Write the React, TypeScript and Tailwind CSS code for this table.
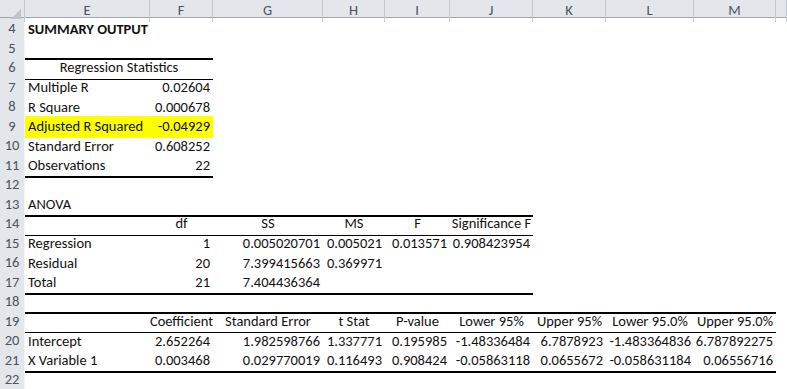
import React from "react";

type Align = "l" | "r" | "c";
type Cell = { text: string; align?: Align; bold?: boolean; span?: number };
type Row = {
  num: number;
  cells: (Cell | null)[];
  line?: { kind: "thick" | "thin"; span: number };
  fill?: number;
};

const cols = ["E", "F", "G", "H", "I", "J", "K", "L", "M", ""];

const L = (text: string, bold = false): Cell => ({ text, align: "l", bold });
const R = (text: string): Cell => ({ text, align: "r" });
const C = (text: string): Cell => ({ text, align: "c" });

const rows: Row[] = [
  { num: 4, cells: [L("SUMMARY OUTPUT", true)] },
  { num: 5, cells: [], line: { kind: "thick", span: 2 } },
  {
    num: 6,
    cells: [{ text: "Regression Statistics", align: "c", span: 2 }],
    line: { kind: "thin", span: 2 },
  },
  { num: 7, cells: [L("Multiple R"), R("0.02604")] },
  { num: 8, cells: [L("R Square"), R("0.000678")] },
  { num: 9, cells: [L("Adjusted R Squared"), R("-0.04929")], fill: 2 },
  { num: 10, cells: [L("Standard Error"), R("0.608252")] },
  {
    num: 11,
    cells: [L("Observations"), R("22")],
    line: { kind: "thick", span: 2 },
  },
  { num: 12, cells: [] },
  { num: 13, cells: [L("ANOVA")], line: { kind: "thick", span: 6 } },
  {
    num: 14,
    cells: [null, C("df"), C("SS"), C("MS"), C("F"), C("Significance F")],
    line: { kind: "thin", span: 6 },
  },
  {
    num: 15,
    cells: [
      L("Regression"),
      R("1"),
      R("0.005020701"),
      R("0.005021"),
      R("0.013571"),
      R("0.908423954"),
    ],
  },
  {
    num: 16,
    cells: [L("Residual"), R("20"), R("7.399415663"), R("0.369971")],
  },
  {
    num: 17,
    cells: [L("Total"), R("21"), R("7.404436364")],
    line: { kind: "thick", span: 6 },
  },
  { num: 18, cells: [], line: { kind: "thick", span: 9 } },
  {
    num: 19,
    cells: [
      null,
      C("Coefficient"),
      C("Standard Error"),
      C("t Stat"),
      C("P-value"),
      C("Lower 95%"),
      C("Upper 95%"),
      C("Lower 95.0%"),
      C("Upper 95.0%"),
    ],
    line: { kind: "thin", span: 9 },
  },
  {
    num: 20,
    cells: [
      L("Intercept"),
      R("2.652264"),
      R("1.982598766"),
      R("1.337771"),
      R("0.195985"),
      R("-1.48336484"),
      R("6.7878923"),
      R("-1.483364836"),
      R("6.787892275"),
    ],
  },
  {
    num: 21,
    cells: [
      L("X Variable 1"),
      R("0.003468"),
      R("0.029770019"),
      R("0.116493"),
      R("0.908424"),
      R("-0.05863118"),
      R("0.0655672"),
      R("-0.058631184"),
      R("0.06556716"),
    ],
    line: { kind: "thick", span: 9 },
  },
  { num: 22, cells: [] },
];

const gridCols =
  "grid grid-cols-[25px_125px_63px_110px_62px_65px_83px_73px_88px_82px_1fr]";

const alignClass = (a?: Align) =>
  a === "r"
    ? "justify-end pr-[3px]"
    : a === "c"
    ? "justify-center"
    : "justify-start pl-[3px]";

const SheetRow = ({ row }: { row: Row }) => {
  const items: React.ReactNode[] = [];
  let i = 0;
  while (i < cols.length) {
    const cell = row.cells[i] ?? null;
    const span = cell?.span ?? 1;
    const lined = row.line && i < row.line.span;
    const filled = row.fill && i < row.fill;
    const border = lined
      ? row.line!.kind === "thick"
        ? "border-b-2 border-black"
        : "border-b border-black"
      : "";
    items.push(
      <div
        key={i}
        className={`flex items-center whitespace-nowrap overflow-visible ${
          span === 2 ? "col-span-2" : ""
        } ${alignClass(cell?.align)} ${border} ${
          filled ? "bg-[#ffff00]" : ""
        } ${cell?.bold ? "font-bold" : ""}`}
      >
        {cell?.text}
      </div>
    );
    i += span;
  }
  return (
    <div className={`${gridCols} h-[19.5px]`}>
      <div className="flex items-center justify-center bg-[#e3e6ea] border-r border-[#9da3ab] border-b border-[#f4f5f7] text-[#4a5461]">
        {row.num}
      </div>
      {items}
    </div>
  );
};

export default function App() {
  return (
    <div
      className="w-[787px] h-[389px] overflow-hidden bg-white text-[14.5px] text-[#111]"
      style={{ fontFamily: "Calibri, Carlito, Lato, 'Liberation Sans', sans-serif" }}
    >
      <div className={`${gridCols} h-[18px] bg-[#e3e6ea] border-b border-[#a2a7ae] text-[#4a5461]`}>
        <div className="relative border-r border-[#c4c9cf]">
          <svg
            className="absolute right-[3px] bottom-[3px]"
            width="10"
            height="10"
            viewBox="0 0 10 10"
          >
            <polygon points="10,0 10,10 0,10" fill="#bfc4ca" />
          </svg>
        </div>
        {cols.map((c, i) => (
          <div
            key={i}
            className="flex items-center justify-center border-r border-[#c4c9cf]"
          >
            {c}
          </div>
        ))}
      </div>
      {rows.map((r) => (
        <SheetRow key={r.num} row={r} />
      ))}
    </div>
  );
}
